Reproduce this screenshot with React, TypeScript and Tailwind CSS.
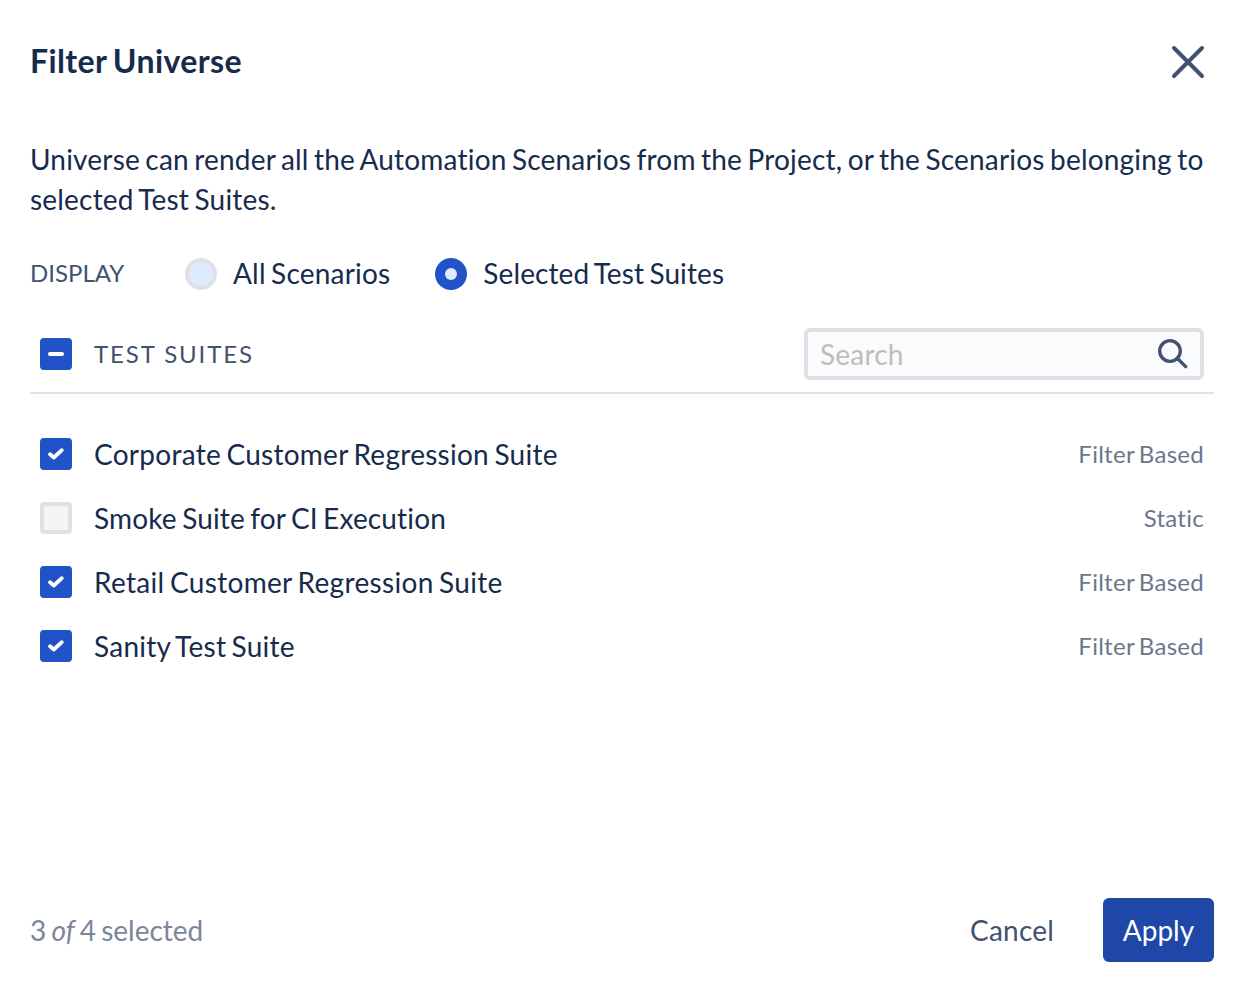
import { X } from 'lucide-react'

const SUITES = [
  { name: 'Corporate Customer Regression Suite', type: 'Filter Based', checked: true, track: 'tracking-[0.27px]' },
  { name: 'Smoke Suite for CI Execution', type: 'Static', checked: false, track: 'tracking-[0.16px]' },
  { name: 'Retail Customer Regression Suite', type: 'Filter Based', checked: true, track: 'tracking-[0.32px]' },
  { name: 'Sanity Test Suite', type: 'Filter Based', checked: true, track: 'tracking-[0.25px]' },
]

function Checkbox({ checked }: { checked: boolean }) {
  if (!checked) {
    return <span className="h-8 w-8 shrink-0 rounded-[4px] border-4 border-[#dfe1e6] bg-[#f4f5f7]" />
  }
  return (
    <span className="flex h-8 w-8 shrink-0 items-center justify-center rounded-[4px] bg-[#2152c8]">
      <svg width="18" height="14" viewBox="0 0 18 14" fill="none">
        <path d="M3 7.2 L6.8 10.5 L14.8 3.2" stroke="#fff" strokeWidth="3.8" strokeLinecap="round" strokeLinejoin="round" />
      </svg>
    </span>
  )
}

export default function App() {
  return (
    <div
      className="flex h-[996px] w-[1254px] flex-col bg-white pl-[30px] pr-10 text-[28px] tracking-[0.2px] text-[#172b4d] [font-variant-ligatures:none] [word-spacing:-2px]"
      style={{ fontFamily: 'Lato, sans-serif' }}
    >
      {/* header */}
      <div className="flex h-[124px] items-center justify-between">
        <h1 className="pb-[2px] text-[32px] font-bold leading-10 tracking-[0.4px] text-[#172b4d]">Filter Universe</h1>
        <X className="mr-[-2px] h-14 w-14 text-[#42526e]" strokeWidth={1.7} />
      </div>

      <p className="mt-[15px] text-[28px] leading-10">
        Universe can render all the Automation Scenarios from the Project, or the Scenarios belonging to selected Test Suites.
      </p>

      {/* display */}
      <div className="mt-[35px] flex h-10 items-center">
        <span className="w-[155px] pb-[2px] text-[24px] tracking-normal text-[#42526e]">DISPLAY</span>
        <span className="h-8 w-8 rounded-full border-4 border-[#dfe1e6] bg-[#deebff]" />
        <span className="ml-4 pb-[2px] leading-10">All Scenarios</span>
        <span className="ml-[45px] flex h-8 w-8 items-center justify-center rounded-full bg-[#2152c8]">
          <span className="h-3 w-3 rounded-full bg-[#deebff]" />
        </span>
        <span className="ml-4 pb-[2px] leading-10 tracking-[0.1px]">Selected Test Suites</span>
      </div>

      {/* suites header */}
      <div className="mt-[34px] flex h-[66px] items-center border-b-2 border-[#dfe1e6] pb-3 pl-2.5 pr-2.5">
        <span className="flex h-8 w-8 items-center justify-center rounded-[4px] bg-[#2152c8]">
          <span className="h-1 w-4 rounded-full bg-white" />
        </span>
        <span className="ml-[22px] text-[24px] tracking-[1.9px] text-[#42526e] [word-spacing:0px]">TEST SUITES</span>
        <div className="ml-auto flex h-[52px] w-[400px] items-center justify-between rounded-[6px] border-4 border-[#dfe1e6] bg-[#fafbfc] pl-3 pr-3">
          <span className="text-[#bdbdbd]">Search</span>
          <svg width="30" height="30" viewBox="0 0 30 30" fill="none" className="text-[#42526e]">
            <circle cx="12" cy="12" r="10.3" stroke="currentColor" strokeWidth="3.3" />
            <path d="M20 20 L27.7 27.7" stroke="currentColor" strokeWidth="3.3" strokeLinecap="round" />
          </svg>
        </div>
      </div>

      {/* suites */}
      <div className="mt-7 flex flex-col pl-2.5 pr-2.5">
        {SUITES.map((s) => (
          <div key={s.name} className="flex h-16 items-center">
            <Checkbox checked={s.checked} />
            <span className={`ml-[22px] ${s.track}`}>{s.name}</span>
            <span className="ml-auto text-[24px] tracking-[0.28px] text-[#6b778c]">{s.type}</span>
          </div>
        ))}
      </div>

      {/* footer */}
      <div className="mb-[34px] mt-auto flex items-center">
        <span className="tracking-normal text-[#7a869a]">
          3 <em>of</em> 4 selected
        </span>
        <span className="ml-auto text-[#42526e]">Cancel</span>
        <button className="ml-[49px] h-16 w-[111px] rounded-[6px] bg-[#1e47a8] tracking-normal text-white">Apply</button>
      </div>
    </div>
  )
}
